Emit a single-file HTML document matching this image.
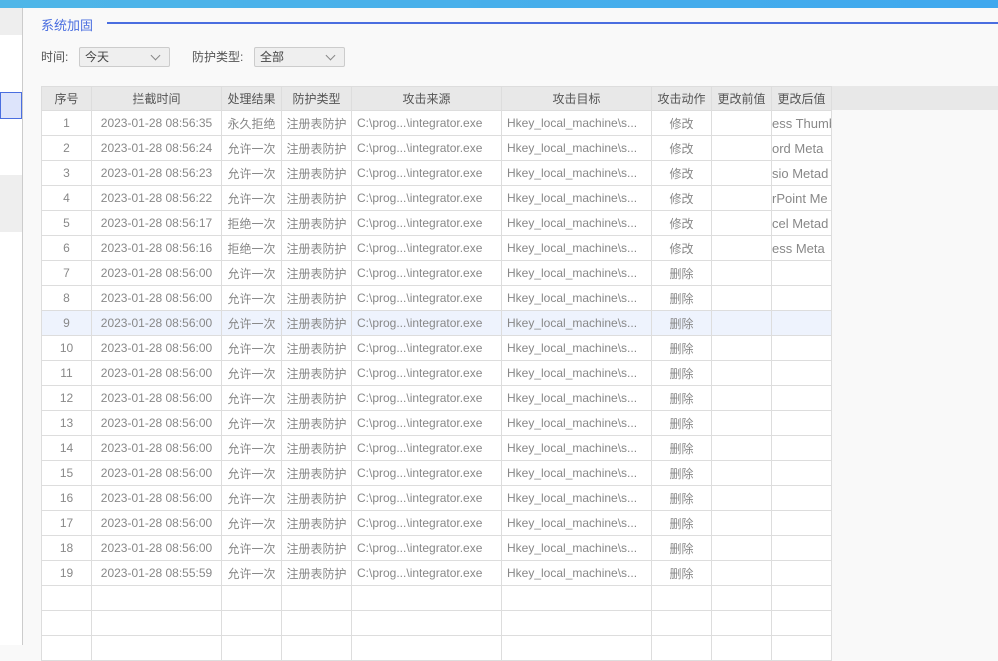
<!DOCTYPE html>
<html><head><meta charset="utf-8"><style>
*{margin:0;padding:0;box-sizing:border-box}
body{width:998px;height:645px;overflow:hidden;background:#f9f9f9;font-family:"Liberation Sans","Noto Sans CJK SC",sans-serif;font-size:12px;color:#888;position:relative}
.top{position:absolute;left:0;top:0;width:998px;height:8px;background:linear-gradient(90deg,#4fb6e8,#3fa8ee)}
.side{position:absolute;left:0;top:8px;width:23px;height:637px;background:#fff;border-right:1px solid #ccc}
.title{position:absolute;left:41px;top:15px;color:#4a6ee0;font-size:13px}
.line{position:absolute;left:107px;top:22px;width:891px;height:2px;background:#4a6ee0}
.lbl{position:absolute;top:48px;color:#555}
.sel{position:absolute;top:47px;height:20px;background:#efefef;border:1px solid #ccc;border-radius:2px;padding-left:5px;line-height:18px;color:#444}
.sel:after{content:"";position:absolute;right:10px;top:4px;width:6px;height:6px;border-right:1px solid #888;border-bottom:1px solid #888;transform:rotate(45deg)}
.hdrbg{position:absolute;left:41px;top:86px;width:957px;height:24px;background:#e8e8e8}
table{position:absolute;left:41px;top:86px;width:791px;border-collapse:collapse;table-layout:fixed;background:#fff}
td,th{border:1px solid #ddd;height:25px;text-align:center;white-space:nowrap;overflow:hidden;font-weight:normal;padding:0}
th{background:#e8e8e8;color:#555;height:24px}
td.l{text-align:left;padding-left:5px}
td.v{text-align:left;font-size:13px;padding:0}
tr.h td{background:#eef3fd}
</style></head><body>
<div class="top"></div>
<div class="side">
<div style="position:absolute;top:0;left:0;width:22px;height:27px;background:#eee"></div>
<div style="position:absolute;top:84px;left:0;width:22px;height:27px;background:#dde4fb;border:1px solid #4a6ee0"></div>
<div style="position:absolute;top:167px;left:0;width:22px;height:57px;background:#eee"></div>
</div>
<div class="title">系统加固</div><div class="line"></div>
<div class="lbl" style="left:41px">时间:</div>
<div class="sel" style="left:79px;width:91px">今天</div>
<div class="lbl" style="left:192px">防护类型:</div>
<div class="sel" style="left:254px;width:91px">全部</div>
<div class="hdrbg"></div>
<table>
<colgroup><col style="width:50px"><col style="width:130px"><col style="width:60px"><col style="width:70px"><col style="width:150px"><col style="width:150px"><col style="width:60px"><col style="width:60px"><col style="width:60px"></colgroup>
<tr><th>序号</th><th>拦截时间</th><th>处理结果</th><th>防护类型</th><th>攻击来源</th><th>攻击目标</th><th>攻击动作</th><th>更改前值</th><th>更改后值</th></tr>
<tr><td>1</td><td>2023-01-28 08:56:35</td><td>永久拒绝</td><td>注册表防护</td><td class="l">C:\prog...\integrator.exe</td><td class="l">Hkey_local_machine\s...</td><td>修改</td><td></td><td class="v">ess Thumb</td></tr>
<tr><td>2</td><td>2023-01-28 08:56:24</td><td>允许一次</td><td>注册表防护</td><td class="l">C:\prog...\integrator.exe</td><td class="l">Hkey_local_machine\s...</td><td>修改</td><td></td><td class="v">ord Meta</td></tr>
<tr><td>3</td><td>2023-01-28 08:56:23</td><td>允许一次</td><td>注册表防护</td><td class="l">C:\prog...\integrator.exe</td><td class="l">Hkey_local_machine\s...</td><td>修改</td><td></td><td class="v">sio Metad</td></tr>
<tr><td>4</td><td>2023-01-28 08:56:22</td><td>允许一次</td><td>注册表防护</td><td class="l">C:\prog...\integrator.exe</td><td class="l">Hkey_local_machine\s...</td><td>修改</td><td></td><td class="v">rPoint Me</td></tr>
<tr><td>5</td><td>2023-01-28 08:56:17</td><td>拒绝一次</td><td>注册表防护</td><td class="l">C:\prog...\integrator.exe</td><td class="l">Hkey_local_machine\s...</td><td>修改</td><td></td><td class="v">cel Metad</td></tr>
<tr><td>6</td><td>2023-01-28 08:56:16</td><td>拒绝一次</td><td>注册表防护</td><td class="l">C:\prog...\integrator.exe</td><td class="l">Hkey_local_machine\s...</td><td>修改</td><td></td><td class="v">ess Meta</td></tr>
<tr><td>7</td><td>2023-01-28 08:56:00</td><td>允许一次</td><td>注册表防护</td><td class="l">C:\prog...\integrator.exe</td><td class="l">Hkey_local_machine\s...</td><td>删除</td><td></td><td></td></tr>
<tr><td>8</td><td>2023-01-28 08:56:00</td><td>允许一次</td><td>注册表防护</td><td class="l">C:\prog...\integrator.exe</td><td class="l">Hkey_local_machine\s...</td><td>删除</td><td></td><td></td></tr>
<tr class="h"><td>9</td><td>2023-01-28 08:56:00</td><td>允许一次</td><td>注册表防护</td><td class="l">C:\prog...\integrator.exe</td><td class="l">Hkey_local_machine\s...</td><td>删除</td><td></td><td></td></tr>
<tr><td>10</td><td>2023-01-28 08:56:00</td><td>允许一次</td><td>注册表防护</td><td class="l">C:\prog...\integrator.exe</td><td class="l">Hkey_local_machine\s...</td><td>删除</td><td></td><td></td></tr>
<tr><td>11</td><td>2023-01-28 08:56:00</td><td>允许一次</td><td>注册表防护</td><td class="l">C:\prog...\integrator.exe</td><td class="l">Hkey_local_machine\s...</td><td>删除</td><td></td><td></td></tr>
<tr><td>12</td><td>2023-01-28 08:56:00</td><td>允许一次</td><td>注册表防护</td><td class="l">C:\prog...\integrator.exe</td><td class="l">Hkey_local_machine\s...</td><td>删除</td><td></td><td></td></tr>
<tr><td>13</td><td>2023-01-28 08:56:00</td><td>允许一次</td><td>注册表防护</td><td class="l">C:\prog...\integrator.exe</td><td class="l">Hkey_local_machine\s...</td><td>删除</td><td></td><td></td></tr>
<tr><td>14</td><td>2023-01-28 08:56:00</td><td>允许一次</td><td>注册表防护</td><td class="l">C:\prog...\integrator.exe</td><td class="l">Hkey_local_machine\s...</td><td>删除</td><td></td><td></td></tr>
<tr><td>15</td><td>2023-01-28 08:56:00</td><td>允许一次</td><td>注册表防护</td><td class="l">C:\prog...\integrator.exe</td><td class="l">Hkey_local_machine\s...</td><td>删除</td><td></td><td></td></tr>
<tr><td>16</td><td>2023-01-28 08:56:00</td><td>允许一次</td><td>注册表防护</td><td class="l">C:\prog...\integrator.exe</td><td class="l">Hkey_local_machine\s...</td><td>删除</td><td></td><td></td></tr>
<tr><td>17</td><td>2023-01-28 08:56:00</td><td>允许一次</td><td>注册表防护</td><td class="l">C:\prog...\integrator.exe</td><td class="l">Hkey_local_machine\s...</td><td>删除</td><td></td><td></td></tr>
<tr><td>18</td><td>2023-01-28 08:56:00</td><td>允许一次</td><td>注册表防护</td><td class="l">C:\prog...\integrator.exe</td><td class="l">Hkey_local_machine\s...</td><td>删除</td><td></td><td></td></tr>
<tr><td>19</td><td>2023-01-28 08:55:59</td><td>允许一次</td><td>注册表防护</td><td class="l">C:\prog...\integrator.exe</td><td class="l">Hkey_local_machine\s...</td><td>删除</td><td></td><td></td></tr>
<tr><td></td><td></td><td></td><td></td><td></td><td></td><td></td><td></td><td></td></tr>
<tr><td></td><td></td><td></td><td></td><td></td><td></td><td></td><td></td><td></td></tr>
<tr><td></td><td></td><td></td><td></td><td></td><td></td><td></td><td></td><td></td></tr>
</table>
</body></html>
